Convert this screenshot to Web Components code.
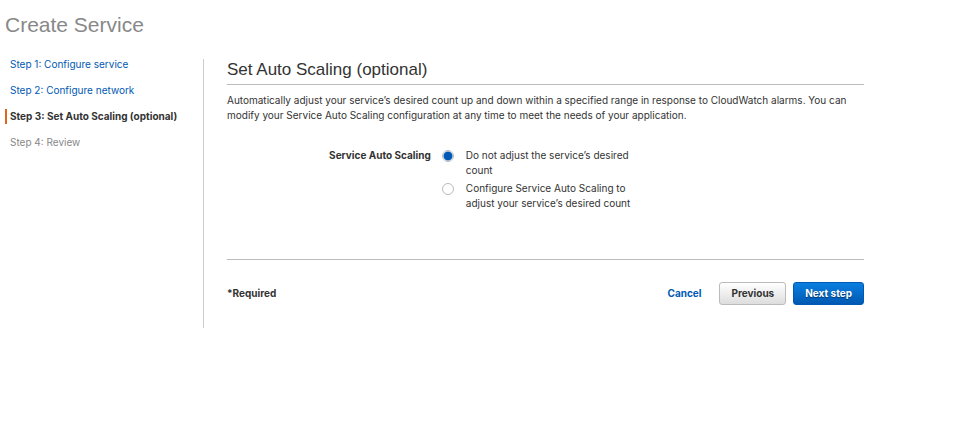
<!DOCTYPE html>
<html lang="en">
<head>
<meta charset="utf-8">
<meta name="viewport" content="width=device-width, initial-scale=1">
<title>Create Service</title>
<style>
body {
  --link: #0059b3;
  --text: #333;
  --muted: #888;
  --rule: #bbb;
  --heading-font: "Liberation Sans", Arial, sans-serif;
  margin: 0;
  background: #fff;
  color: var(--text);
  font: 10px/15px Inter, "Liberation Sans", Arial, sans-serif;
}
</style>
</head>
<body>
<service-wizard heading="Create Service">
  <wizard-steps slot="steps">
    <wizard-step state="done">Step 1: Configure service</wizard-step>
    <wizard-step state="done">Step 2: Configure network</wizard-step>
    <wizard-step state="current">Step 3: Set Auto Scaling (optional)</wizard-step>
    <wizard-step>Step 4: Review</wizard-step>
  </wizard-steps>
  <wizard-panel heading="Set Auto Scaling (optional)">
    <span slot="intro">Automatically adjust your service’s desired count up and down within a specified range in response to CloudWatch alarms. You can modify your Service Auto Scaling configuration at any time to meet the needs of your application.</span>
    <scaling-options></scaling-options>
  </wizard-panel>
  <wizard-footer></wizard-footer>
</service-wizard>

<script>
function define(name, markup, setup) {
  customElements.define(name, class extends HTMLElement {
    constructor() {
      super();
      this.attachShadow({ mode: "open" }).innerHTML = markup;
    }
    connectedCallback() {
      if (setup) setup(this, this.shadowRoot);
    }
  });
}

function setHeading(host, root) {
  root.querySelector("[data-heading]").textContent = host.getAttribute("heading");
}

define("service-wizard", `
<style>
  :host { display: block; padding: 12px 110px 0 5px; }
  h1 { margin: 0 0 21px; font: 400 21px/26px var(--heading-font); color: var(--muted); }
  .columns { display: grid; grid-template-columns: 198px minmax(0, 1fr); }
  main { border-left: 1px solid #ccc; padding: 0 0 23px 23px; }
</style>
<h1 data-heading></h1>
<div class="columns">
  <slot name="steps"></slot>
  <main><slot></slot></main>
</div>`, setHeading);

define("wizard-steps", `
<style>
  :host { display: block; }
  nav { display: flex; flex-direction: column; gap: 11px; margin-top: -2px; }
</style>
<nav aria-label="Steps"><slot></slot></nav>`);

define("wizard-step", `
<style>
  :host { display: block; border-left: 2px solid transparent; padding-left: 3px; color: var(--muted); white-space: nowrap; }
  :host([state="current"]) { border-color: #e0661b; color: var(--text); font-weight: 700; }
  a { color: var(--link); text-decoration: none; }
  a:hover { text-decoration: underline; }
</style>
<span><slot></slot></span>`, (host, root) => {
  if (host.getAttribute("state") === "done" && !root.querySelector("a")) {
    const link = document.createElement("a");
    link.href = "#";
    link.append(document.createElement("slot"));
    root.querySelector("span").replaceWith(link);
  }
});

define("wizard-panel", `
<style>
  :host { display: block; border-bottom: 1px solid var(--rule); padding-bottom: 48px; }
  h2 { margin: 0 0 8px; padding-bottom: 3px; border-bottom: 1px solid var(--rule); font: 400 17px/22px var(--heading-font); }
  p { margin: 0 0 25px; }
</style>
<h2 data-heading></h2>
<p><slot name="intro"></slot></p>
<slot></slot>`, setHeading);

define("scaling-options", `
<style>
  :host { display: block; }
  .field { display: grid; grid-template-columns: 32% minmax(0, 1fr); column-gap: 11px; }
  .name { text-align: right; font-weight: 700; }
  .choices { display: flex; flex-direction: column; gap: 3px; }
  .choice { display: grid; grid-template-columns: 12px minmax(0, 168px); column-gap: 12px; align-items: start; }
  input { appearance: none; box-sizing: border-box; width: 12px; height: 12px; margin: 2px 0 0; border: 1px solid #bbb; border-radius: 50%; background: #fff; }
  input:checked { background: radial-gradient(circle, var(--link) 4px, #fff 5px); }
</style>
<div class="field" role="radiogroup" aria-labelledby="name">
  <div class="name" id="name">Service Auto Scaling</div>
  <div class="choices">
    <div class="choice"><input type="radio" name="scaling" id="fixed" checked><label for="fixed">Do not adjust the service’s desired count</label></div>
    <div class="choice"><input type="radio" name="scaling" id="auto"><label for="auto">Configure Service Auto Scaling to adjust your service’s desired count</label></div>
  </div>
</div>`);

define("wizard-footer", `
<style>
  :host { display: flex; align-items: center; justify-content: space-between; padding-top: 22px; font-weight: 700; }
  .actions { display: flex; align-items: center; gap: 7px; }
  a { margin-right: 11px; color: var(--link); text-decoration: none; }
  button { box-sizing: border-box; height: 23px; padding: 0 11px; border: 1px solid #bbb; border-radius: 3px; background: linear-gradient(#fff, #ddd); color: var(--text); font: inherit; }
  .primary { border-color: #0059b3; background: linear-gradient(#0a7fe0, #0059b3); color: #fff; text-shadow: 0 1px 1px #00366d; }
</style>
<span>*Required</span>
<div class="actions">
  <a href="#">Cancel</a>
  <button type="button">Previous</button>
  <button type="button" class="primary">Next step</button>
</div>`);
</script>
</body>
</html>
